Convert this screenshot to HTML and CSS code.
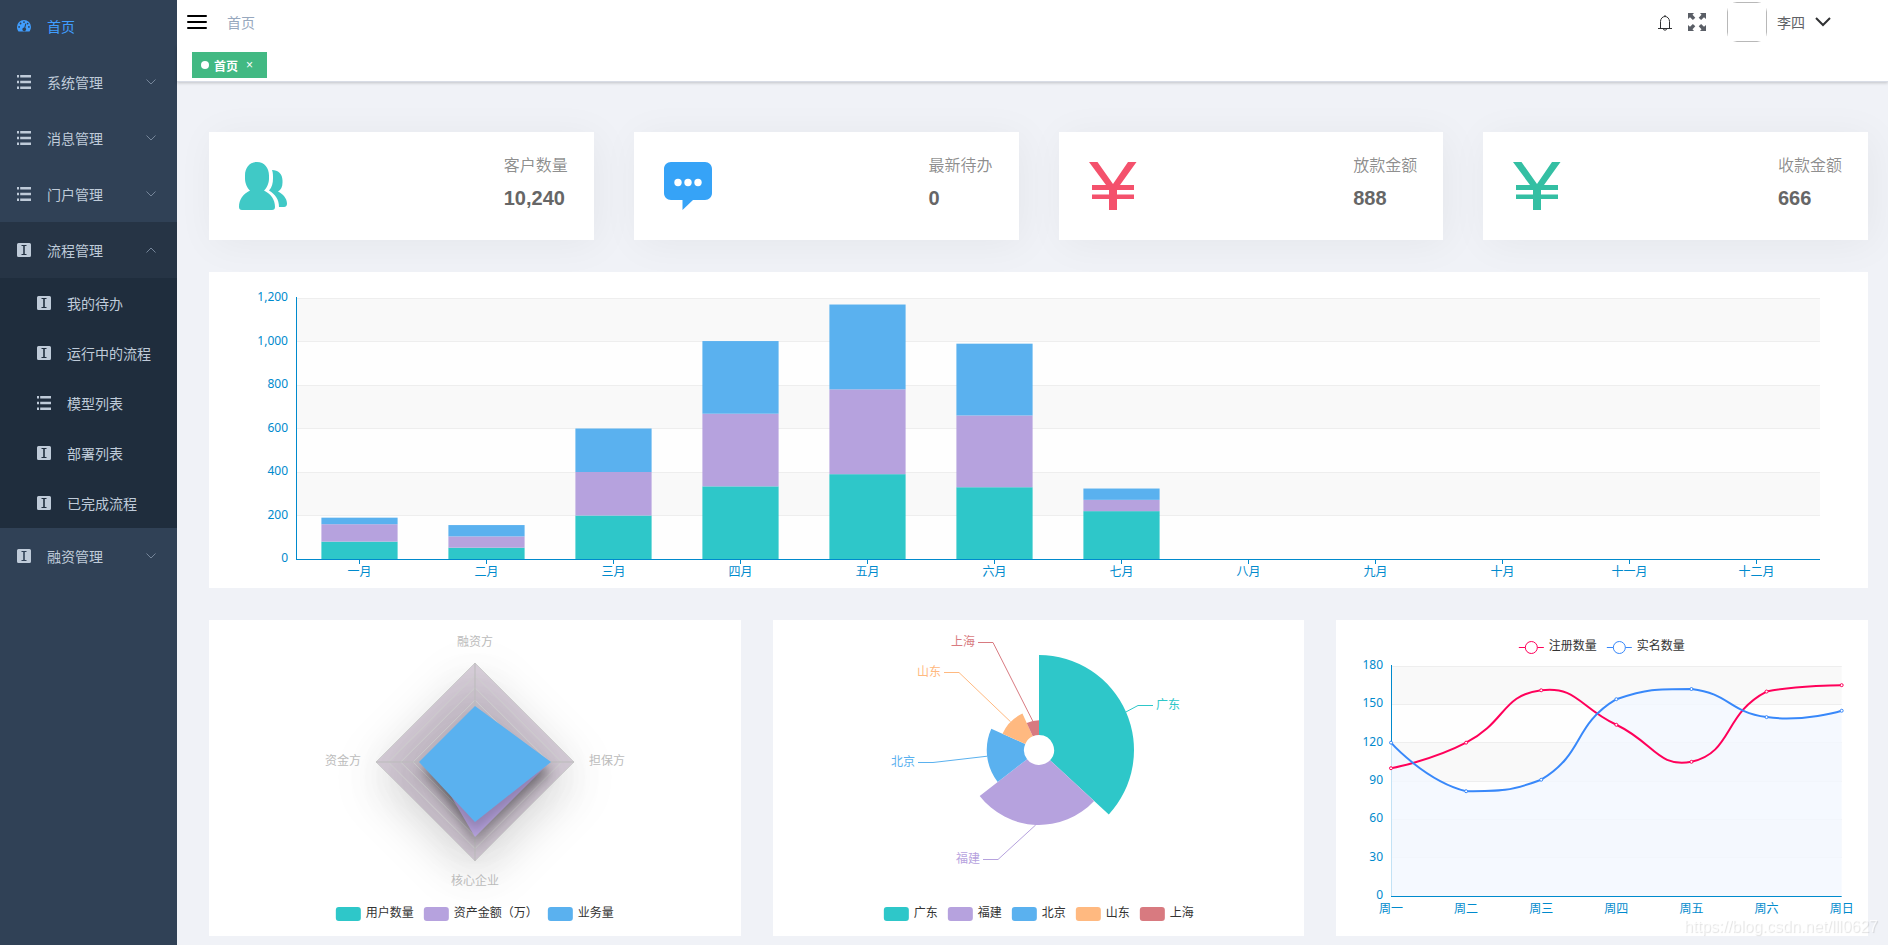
FILE: index.html
```html
<!DOCTYPE html>
<html lang="zh-CN">
<head>
<meta charset="utf-8">
<title>首页</title>
<link rel="stylesheet" href="styles.css">
</head>
<body>
<svg class="sprite" aria-hidden="true">
  <symbol id="i-gauge" viewBox="0 0 14 14"><path fill-rule="evenodd" d="M7 1a7 7 0 0 0-7 7c0 1.600.500 3 1.300 4.200q.300.300.700.300h10q.400 0 .700-.300A7.300 7.300 0 0 0 14 8a7 7 0 0 0-7-7zM7 2.200a.9.900 0 1 1 0 1.800.9.900 0 0 1 0-1.800zM3.600 3.600a.9.900 0 1 1 0 1.800.9.900 0 0 1 0-1.800zM2.100 7a.9.900 0 1 1 0 1.800.9.900 0 0 1 0-1.800zM11.900 7a.9.900 0 1 1 0 1.800.9.900 0 0 1 0-1.800zM10.600 3.700a.9.900 0 1 1 0 1.800.9.900 0 0 1 0-1.800zM8.300 4.600l1 .300-1 3.800a1.900 1.900 0 1 1-1-.300z"/></symbol>
  <symbol id="i-list" viewBox="0 0 14 14"><path d="M0 0h2v2.400H0zM3.200 0H14v2.400H3.200zM0 5.800h2v2.400H0zM3.200 5.800H14v2.400H3.200zM0 11.600h2V14H0zM3.200 11.600H14V14H3.200z"/></symbol>
  <symbol id="i-text" viewBox="0 0 14 14"><path fill-rule="evenodd" d="M1.500 0h11Q14 0 14 1.500v11q0 1.500-1.500 1.500h-11Q0 14 0 12.500v-11Q0 0 1.500 0zM4.500 2v1H6.200v8H4.500v1h5v-1H7.800V3h1.700V2z"/></symbol>
  <symbol id="i-down" viewBox="0 0 10 6"><path d="M.500.500 5 5 9.500.500" fill="none" stroke="currentColor"/></symbol>
  <symbol id="i-up" viewBox="0 0 10 6"><path d="M.500 5.500 5 1 9.500 5.500" fill="none" stroke="currentColor"/></symbol>
  <symbol id="i-yen" viewBox="0 0 48 48"><path d="M0 0h8.500L24 22 39 0h8.500L31 23H45v5H28v4.500h17V37H28v11h-8V37H3v-4.500h17V28H3v-5h14z"/></symbol>
</svg>
<div class="app">
  <nav class="sidebar" aria-label="主菜单">
    <ul class="menu">
      <li><a class="item current" href="#home"><svg class="ico"><use href="#i-gauge"/></svg><span>首页</span></a></li>
      <li><button class="item" type="button"><svg class="ico"><use href="#i-list"/></svg><span>系统管理</span><svg class="arrow"><use href="#i-down"/></svg></button></li>
      <li><button class="item" type="button"><svg class="ico"><use href="#i-list"/></svg><span>消息管理</span><svg class="arrow"><use href="#i-down"/></svg></button></li>
      <li><button class="item" type="button"><svg class="ico"><use href="#i-list"/></svg><span>门户管理</span><svg class="arrow"><use href="#i-down"/></svg></button></li>
      <li>
        <button class="item opened" type="button" aria-expanded="true"><svg class="ico"><use href="#i-text"/></svg><span>流程管理</span><svg class="arrow"><use href="#i-up"/></svg></button>
        <ul class="submenu">
          <li><a class="item sub" href="#todo"><svg class="ico"><use href="#i-text"/></svg><span>我的待办</span></a></li>
          <li><a class="item sub" href="#running"><svg class="ico"><use href="#i-text"/></svg><span>运行中的流程</span></a></li>
          <li><a class="item sub" href="#models"><svg class="ico"><use href="#i-list"/></svg><span>模型列表</span></a></li>
          <li><a class="item sub" href="#deploy"><svg class="ico"><use href="#i-text"/></svg><span>部署列表</span></a></li>
          <li><a class="item sub" href="#done"><svg class="ico"><use href="#i-text"/></svg><span>已完成流程</span></a></li>
        </ul>
      </li>
      <li><button class="item" type="button"><svg class="ico"><use href="#i-text"/></svg><span>融资管理</span><svg class="arrow"><use href="#i-down"/></svg></button></li>
    </ul>
  </nav>

  <div class="page">
    <header class="topbar">
      <button class="plain" type="button" aria-label="折叠菜单"><svg width="20" height="16" viewBox="0 0 20 16"><path d="M1 2h18M1 8h18M1 14h18" stroke="#000" stroke-width="2" stroke-linecap="round"/></svg></button>
      <span class="crumb">首页</span>
      <div class="tools">
        <button class="plain" type="button" aria-label="通知"><svg width="16" height="18" viewBox="0 0 16 18" fill="none" stroke="#303133"><path d="M1 15.500h14M3.500 15.500V8.500a4.500 5 0 0 1 9 0v7M8 2v1.500M6.300 15.500a1.700 1.700 0 0 0 3.400 0"/></svg></button>
        <button class="plain" type="button" aria-label="全屏"><svg width="18" height="18" viewBox="0 0 18 18" fill="#5a5e66"><path id="corner" d="M0 0h6L4.500 1.800 7.300 4.700 4.900 7 2 4.200 0 6z"/><use href="#corner" transform="matrix(-1 0 0 1 18 0)"/><use href="#corner" transform="matrix(1 0 0 -1 0 18)"/><use href="#corner" transform="matrix(-1 0 0 -1 18 18)"/></svg></button>
        <button class="plain user" type="button"><span class="avatar"><span class="frame"></span></span><span>李四</span><svg width="16" height="10" viewBox="0 0 16 10"><path d="M1 1l7 7 7-7" fill="none" stroke="#303133" stroke-width="2"/></svg></button>
      </div>
    </header>
    <div class="tags"><a class="tag" href="#home"><i class="dot"></i>首页<span class="close">×</span></a></div>

    <main class="content">
      <section class="cards">
        <article class="card">
          <svg class="big" viewBox="0 0 48 48" fill="#40c9c6"><path d="M18 0c7.500 0 12 6 12 13.500v3c0 4.500-2 9.500-5 12 7 3.500 11 9 11 16.500 0 2-1 3-3 3H3c-2 0-3-1-3-3 0-7.500 4-13 11-16.500-3-2.500-5-7.500-5-12v-3C6 6 10.500 0 18 0z"/><path d="M33 8c6 0 10.500 4 10.500 10.500v2c0 4-1.500 7.500-4.500 9 5 2.500 9 7 9 12 0 2-1 3.500-3 3.500h-5c0-7.500-3.500-12.500-10-16.500 3-3 4-8 4-12 0-3 0-6-1-8.500z"/></svg>
          <div><p class="label">客户数量</p><p class="num">10,240</p></div>
        </article>
        <article class="card">
          <svg class="big" viewBox="0 0 48 48"><path fill="#36a3f7" d="M7 0h34c4 0 7 3 7 7v24c0 4-3 7-7 7H29L18.500 48V38H7c-4 0-7-3-7-7V7c0-4 3-7 7-7z"/><g fill="#fff"><circle cx="14" cy="20.500" r="3.700"/><circle cx="24" cy="20.500" r="3.700"/><circle cx="34" cy="20.500" r="3.700"/></g></svg>
          <div><p class="label">最新待办</p><p class="num">0</p></div>
        </article>
        <article class="card">
          <svg class="big" fill="#f4516c"><use href="#i-yen"/></svg>
          <div><p class="label">放款金额</p><p class="num">888</p></div>
        </article>
        <article class="card">
          <svg class="big" fill="#34bfa3"><use href="#i-yen"/></svg>
          <div><p class="label">收款金额</p><p class="num">666</p></div>
        </article>
      </section>
      <section class="panel"><svg class="chart" id="bar" role="img" aria-label="月度统计"></svg></section>
      <section class="trio">
        <div class="panel"><svg class="chart" id="radar" role="img" aria-label="业务分布"></svg></div>
        <div class="panel"><svg class="chart" id="pie" role="img" aria-label="地区分布"></svg></div>
        <div class="panel"><svg class="chart" id="line" role="img" aria-label="注册与实名数量"></svg></div>
      </section>
    </main>
  </div>
</div>
<div class="watermark">https://blog.csdn.net/lll0627</div>
<script src="script.js"></script>
</body>
</html>
```
FILE: styles.css
```css
* { box-sizing: border-box; }

body {
  margin: 0;
  background: #f0f2f7;
  font-family: "Liberation Sans", "Noto Sans CJK SC", sans-serif;
  font-size: 14px;
  color: #606266;
}

ul { list-style: none; margin: 0; padding: 0; }
p { margin: 0; }
a { text-decoration: none; color: inherit; }
button { font: inherit; color: inherit; border: 0; background: none; padding: 0; text-align: left; cursor: pointer; }
svg { display: block; }
.sprite { position: absolute; width: 0; height: 0; }

.app { display: flex; min-height: 100vh; }

/* sidebar */
.sidebar { flex: 0 0 177px; background: #304156; color: #bfcbd9; overflow: hidden; }
.menu { margin-top: -2px; }
.item { display: flex; align-items: center; gap: 16px; width: 100%; height: 56px; padding: 0 21px 0 17px; }
.item.current { color: #409eff; }
.item.opened { background: #263445; }
.item.sub { height: 50px; padding-left: 37px; }
.submenu { background: #1f2d3d; }
.ico { width: 14px; height: 14px; fill: currentColor; }
.arrow { width: 10px; height: 6px; margin-left: auto; color: #76869a; }

/* header */
.page { flex: 1; min-width: 0; }
.topbar { position: relative; z-index: 1; display: flex; align-items: center; height: 46px; padding: 0 57px 2px 10px; background: #fff; }
.plain { display: flex; align-items: center; }
.crumb { margin-left: 20px; color: #97a8be; }
.tools { display: flex; align-items: center; gap: 15px; margin-left: auto; }
.user { gap: 10px; margin-left: 6px; }
.avatar { width: 40px; height: 40px; border-radius: 10px; overflow: hidden; }
.frame { display: block; height: 100%; border: 1px solid #b8b8b8; }
.tags { display: flex; height: 36px; padding: 6px 15px 0; background: #fff; border-bottom: 1px solid #d8dce5; box-shadow: 0 1px 3px rgba(0, 0, 0, .2); }
.tag { display: flex; align-items: center; height: 26px; padding: 0 14px 0 9px; background: #42b983; color: #fff; font-size: 12px; font-weight: 700; }
.dot { width: 8px; height: 8px; margin-right: 5px; border-radius: 50%; background: #fff; }
.close { margin-left: 8px; font-weight: 400; }

/* content */
.content { display: flex; flex-direction: column; gap: 32px; padding: 50px 20px 8px 32px; }
.cards { display: grid; grid-template-columns: repeat(4, 1fr); gap: 40px; }
.card { display: flex; justify-content: space-between; align-items: flex-start; height: 108px; padding: 30px 26px 0 30px; background: #fff; box-shadow: 4px 4px 40px rgba(0, 0, 0, .05); }
.card > div { width: 64px; margin-top: -8px; }
.big { width: 48px; height: 48px; }
.label { margin-bottom: 8px; font-size: 16px; line-height: 24px; color: rgba(0, 0, 0, .45); }
.num { font-size: 20px; line-height: 24px; font-weight: 700; color: #666; }
.trio { display: grid; grid-template-columns: repeat(3, 1fr); gap: 32px; }
.panel { min-width: 0; background: #fff; }

/* charts */
.chart { width: 100%; height: 316px; font-family: "Noto Sans", "Noto Sans CJK SC", sans-serif; font-size: 12px; }
.axis-text { fill: #008acd; }
.legend-text { fill: #333; }
.radar-text { fill: #bbb; }
.axis { stroke: #008acd; }
.grid { stroke: #eee; }
.band-a { fill: #fefefe; }
.band-b { fill: #f9f9f9; }
.ring { fill: rgba(127, 95, 132, .3); fill-rule: evenodd; filter: drop-shadow(0 15px 22px rgba(0, 0, 0, .5)); }
.ring-line { fill: none; stroke: #ccc; }
.spoke { stroke: #bbb; }
.shape { filter: drop-shadow(0 10px 6px rgba(0, 0, 0, .2)); }
.area { fill: #f3f8ff; opacity: .8; }
.curve { fill: none; stroke-width: 2; }
.point { fill: #fff; }
.leader { fill: none; }

.watermark { position: fixed; right: 10px; bottom: 8px; font-size: 16px; line-height: 20px; color: rgba(255, 255, 255, .7); text-shadow: 1px 1px 1px rgba(0, 0, 0, .12); pointer-events: none; }
```
FILE: script.js
```js
const NS = 'http://www.w3.org/2000/svg';
const COLORS = ['#2ec7c9', '#b6a2de', '#5ab1ef', '#ffb980', '#d87a80'];

function add(parent, tag, attrs, text) {
  const node = document.createElementNS(NS, tag);
  for (const key in attrs) node.setAttribute(key, attrs[key]);
  if (text !== undefined) node.textContent = text;
  parent.appendChild(node);
  return node;
}

const snap = v => Math.floor(v) + 0.5;

// Horizontal bands, split lines and value labels shared by the axis charts
function drawGrid(svg, box, max, step) {
  const y = v => box.bottom - (box.bottom - box.top) * v / max;
  for (let v = 0, i = 0; v < max; v += step, i++) {
    add(svg, 'rect', { class: i % 2 ? 'band-b' : 'band-a', x: box.left, y: y(v + step), width: box.right - box.left, height: y(v) - y(v + step) });
  }
  for (let v = 0; v <= max; v += step) {
    if (v) add(svg, 'line', { class: 'grid', x1: box.left, x2: box.right, y1: snap(y(v)), y2: snap(y(v)) });
    add(svg, 'text', { class: 'axis-text', x: box.left - 8, y: Math.round(y(v)) + 3, 'text-anchor': 'end' }, v.toLocaleString('en-US'));
  }
  return y;
}

function drawAxes(svg, box) {
  add(svg, 'line', { class: 'axis', x1: box.left, x2: box.right, y1: snap(box.bottom), y2: snap(box.bottom) });
}

function drawLegend(svg, width, cy, items, lineStyle) {
  const itemWidth = name => 30 + name.length * 12;
  let x = (width - items.reduce((sum, it) => sum + itemWidth(it.name) + 10, -10)) / 2;
  items.forEach(it => {
    if (lineStyle) {
      add(svg, 'line', { x1: x, x2: x + 25, y1: cy + 0.5, y2: cy + 0.5, stroke: it.color });
      add(svg, 'circle', { cx: x + 12.5, cy: cy + 0.5, r: 6, fill: '#fff', stroke: it.color });
    } else {
      add(svg, 'rect', { x, y: cy - 7, width: 25, height: 14, rx: 3, fill: it.color });
    }
    add(svg, 'text', { class: 'legend-text', x: x + 30, y: cy + 3 }, it.name);
    x += itemWidth(it.name) + 10;
  });
}

function drawBar(svg, width) {
  const box = { left: 87, right: width - 48, top: 26, bottom: 287 };
  const months = ['一月', '二月', '三月', '四月', '五月', '六月', '七月', '八月', '九月', '十月', '十一月', '十二月'];
  const series = [
    [80, 52, 200, 334, 390, 330, 220],
    [80, 52, 200, 334, 390, 330, 52],
    [30, 52, 200, 334, 390, 330, 52]
  ];
  const y = drawGrid(svg, box, 1200, 200);
  const slot = (box.right - box.left) / months.length;
  months.forEach((name, i) => {
    const cx = box.left + slot * (i + 0.5);
    let sum = 0;
    series.forEach((data, s) => {
      const v = data[i] || 0;
      if (v) add(svg, 'rect', { x: cx - slot * 0.3, y: y(sum + v), width: slot * 0.6, height: y(sum) - y(sum + v), fill: COLORS[s] });
      sum += v;
    });
    add(svg, 'line', { class: 'axis', x1: snap(cx), x2: snap(cx), y1: box.bottom, y2: box.bottom + 5 });
    add(svg, 'text', { class: 'axis-text', x: cx, y: box.bottom + 17, 'text-anchor': 'middle' }, name);
  });
  add(svg, 'line', { class: 'axis', x1: box.left + 0.5, x2: box.left + 0.5, y1: box.top - 1, y2: box.bottom });
  drawAxes(svg, box);
}

function drawRadar(svg, width) {
  const cx = Math.floor(width / 2) + 1, cy = 142, R = 99;
  const poly = r => `M${cx} ${cy - r[0]}L${cx + r[1]} ${cy}L${cx} ${cy + r[2]}L${cx - r[3]} ${cy}Z`;
  const even = r => poly([r, r, r, r]);
  for (let i = 0; i < 8; i++) {
    add(svg, 'path', { class: 'ring', d: even(R * (i + 1) / 8) + (i ? even(R * i / 8) : '') });
  }
  for (let i = 1; i <= 8; i++) add(svg, 'path', { class: 'ring-line', d: even(R * i / 8) });
  add(svg, 'line', { class: 'spoke', x1: cx - R, x2: cx + R, y1: cy, y2: cy });
  add(svg, 'line', { class: 'spoke', x1: cx, x2: cx, y1: cy - R, y2: cy + R });
  [[50, 60, 55, 45], [40, 75, 75, 44], [56, 76, 60, 56]].forEach((r, i) => {
    add(svg, 'path', { class: 'shape', d: poly(r), fill: COLORS[i] });
  });
  add(svg, 'text', { class: 'radar-text', x: cx, y: 26, 'text-anchor': 'middle' }, '融资方');
  add(svg, 'text', { class: 'radar-text', x: cx, y: 265, 'text-anchor': 'middle' }, '核心企业');
  add(svg, 'text', { class: 'radar-text', x: cx - 114, y: 145, 'text-anchor': 'end' }, '资金方');
  add(svg, 'text', { class: 'radar-text', x: cx + 114, y: 145 }, '担保方');
  drawLegend(svg, width, 294, ['用户数量', '资产金额（万）', '业务量'].map((name, i) => ({ name, color: COLORS[i] })));
}

function drawPie(svg, width) {
  const cx = Math.round(width / 2), cy = 130, inner = 15;
  const data = [
    { name: '广东', value: 320, elbow: [99, -45] },
    { name: '福建', value: 240, elbow: [-41, 109] },
    { name: '北京', value: 149, elbow: [-106, 12] },
    { name: '山东', value: 100, elbow: [-80, -78] },
    { name: '上海', value: 59, elbow: [-46, -108] }
  ];
  const total = data.reduce((s, d) => s + d.value, 0);
  const at = (r, a) => `${cx + r * Math.sin(a)} ${cy - r * Math.cos(a)}`;
  let a0 = 0;
  data.forEach((d, i) => {
    const a1 = a0 + d.value / total * Math.PI * 2;
    const r = inner + 80 * d.value / 320;
    add(svg, 'path', { fill: COLORS[i], d: `M${at(inner, a0)}L${at(r, a0)}A${r} ${r} 0 0 1 ${at(r, a1)}L${at(inner, a1)}A${inner} ${inner} 0 0 0 ${at(inner, a0)}Z` });
    const side = d.elbow[0] > 0 ? 1 : -1;
    const ex = cx + d.elbow[0], ey = snap(cy + d.elbow[1]);
    add(svg, 'path', { class: 'leader', stroke: COLORS[i], d: `M${at(r, (a0 + a1) / 2)}L${ex} ${ey}H${ex + 15 * side}` });
    add(svg, 'text', { x: ex + 18 * side, y: ey + 3.5, fill: COLORS[i], 'text-anchor': side > 0 ? 'start' : 'end' }, d.name);
    a0 = a1;
  });
  drawLegend(svg, width, 294, data.map((d, i) => ({ name: d.name, color: COLORS[i] })));
}

// Cubic spline whose control points stay inside the bounds of the data
function smoothPath(pts) {
  const ys = pts.map(p => p[1]);
  const lo = Math.min(...ys), hi = Math.max(...ys);
  const clamp = v => Math.max(lo, Math.min(hi, v));
  let d = `M${pts[0]}`, out = pts[0];
  for (let i = 1; i < pts.length; i++) {
    const p = pts[i], prev = pts[i - 1], next = pts[i + 1];
    let into = p, after = p;
    if (next) {
      const a = Math.hypot(p[0] - prev[0], p[1] - prev[1]);
      const b = Math.hypot(p[0] - next[0], p[1] - next[1]);
      const k = b / (a + b);
      const v = [next[0] - prev[0], next[1] - prev[1]];
      into = [p[0] - v[0] * 0.5 * (1 - k), clamp(p[1] - v[1] * 0.5 * (1 - k))];
      after = [p[0] + v[0] * 0.5 * k, clamp(p[1] + v[1] * 0.5 * k)];
    }
    d += `C${out} ${into} ${p}`;
    out = after;
  }
  return d;
}

function drawLine(svg, width) {
  const box = { left: 55, right: width - 26, top: 46, bottom: 276 };
  const days = ['周一', '周二', '周三', '周四', '周五', '周六', '周日'];
  const series = [
    { name: '注册数量', color: '#ff005a', data: [100, 120, 161, 134, 105, 160, 165] },
    { name: '实名数量', color: '#3888fa', data: [120, 82, 91, 154, 162, 140, 145], area: true }
  ];
  const y = drawGrid(svg, box, 180, 30);
  const x = i => box.left + (box.right - box.left) * i / (days.length - 1);
  add(svg, 'line', { class: 'axis', x1: box.left + 0.5, x2: box.left + 0.5, y1: box.top - 1, y2: box.bottom });
  days.forEach((name, i) => add(svg, 'text', { class: 'axis-text', x: x(i), y: box.bottom + 17, 'text-anchor': 'middle' }, name));
  const lines = series.map(s => {
    const pts = s.data.map((v, i) => [x(i), y(v)]);
    return { s, pts, d: smoothPath(pts) };
  });
  lines.forEach(l => {
    if (l.s.area) add(svg, 'path', { class: 'area', d: `${l.d}V${box.bottom}H${box.left}Z` });
  });
  drawAxes(svg, box);
  lines.forEach(l => {
    add(svg, 'path', { class: 'curve', d: l.d, stroke: l.s.color });
    l.pts.forEach(p => add(svg, 'circle', { class: 'point', cx: p[0], cy: p[1], r: 1.5, stroke: l.s.color }));
  });
  drawLegend(svg, width, 27, series, true);
}

function render() {
  Object.entries({ bar: drawBar, radar: drawRadar, pie: drawPie, line: drawLine }).forEach(([id, draw]) => {
    const svg = document.getElementById(id);
    svg.textContent = '';
    draw(svg, svg.getBoundingClientRect().width);
  });
}

render();
window.addEventListener('resize', render);
```
